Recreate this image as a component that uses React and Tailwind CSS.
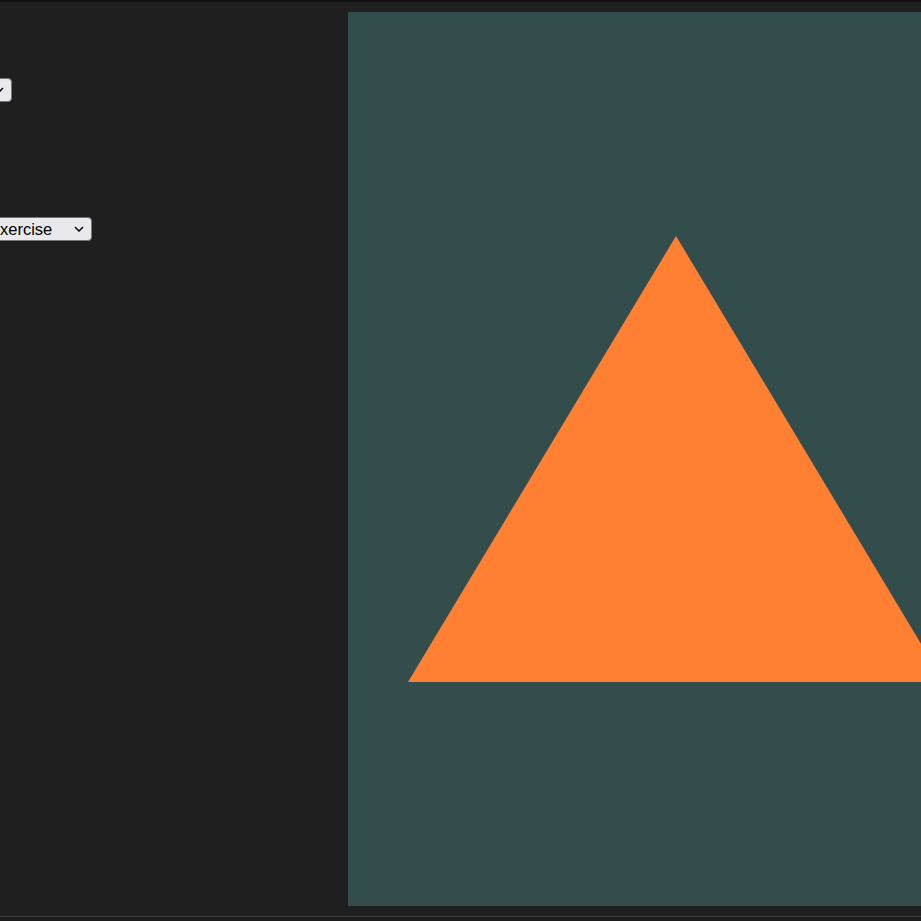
import React from "react";

function Chevron() {
  return (
    <svg width="10" height="6" viewBox="0 0 10 6" className="shrink-0">
      <path d="M1 1 L5 5 L9 1" fill="none" stroke="#111" strokeWidth="1.6" />
    </svg>
  );
}

function FakeSelect({ label, className }) {
  return (
    <div
      className={
        "flex h-[24px] items-center justify-between rounded-[4px] border border-[#767676] bg-[#e9e9ed] pl-[3px] pr-[7px] text-[16.5px] leading-none text-black " +
        className
      }
      style={{ fontFamily: '"Liberation Sans", Arial, sans-serif' }}
    >
      <span className="whitespace-nowrap">{label}</span>
      <Chevron />
    </div>
  );
}

export default function App() {
  return (
    <div className="relative h-[921px] w-[921px] overflow-hidden bg-[#1f1f1f]">
      <div className="h-[2px] w-full bg-[#121214]" />
      <div className="flex h-[914px]">
        <div className="flex w-[348px] shrink-0 flex-col">
          <div className="h-[76px]" />
          <FakeSelect label="Triangle" className="ml-[-90px] w-[102px]" />
          <div className="h-[115px]" />
          <FakeSelect label="Exercise" className="ml-[-15px] w-[107px]" />
        </div>
        <div className="flex flex-col pt-[10px]">
          <div className="h-[894px] w-[656px] bg-[#334d4d]">
            <svg width="656" height="894" viewBox="0 0 656 894" className="block">
              <polygon points="328,224 60,670 596,670" fill="#ff8033" />
            </svg>
          </div>
        </div>
      </div>
      <div className="h-[1px] w-full bg-[#3d3d3d]" />
      <div className="h-[4px] w-full bg-[#1c1c1c]" />
    </div>
  );
}
